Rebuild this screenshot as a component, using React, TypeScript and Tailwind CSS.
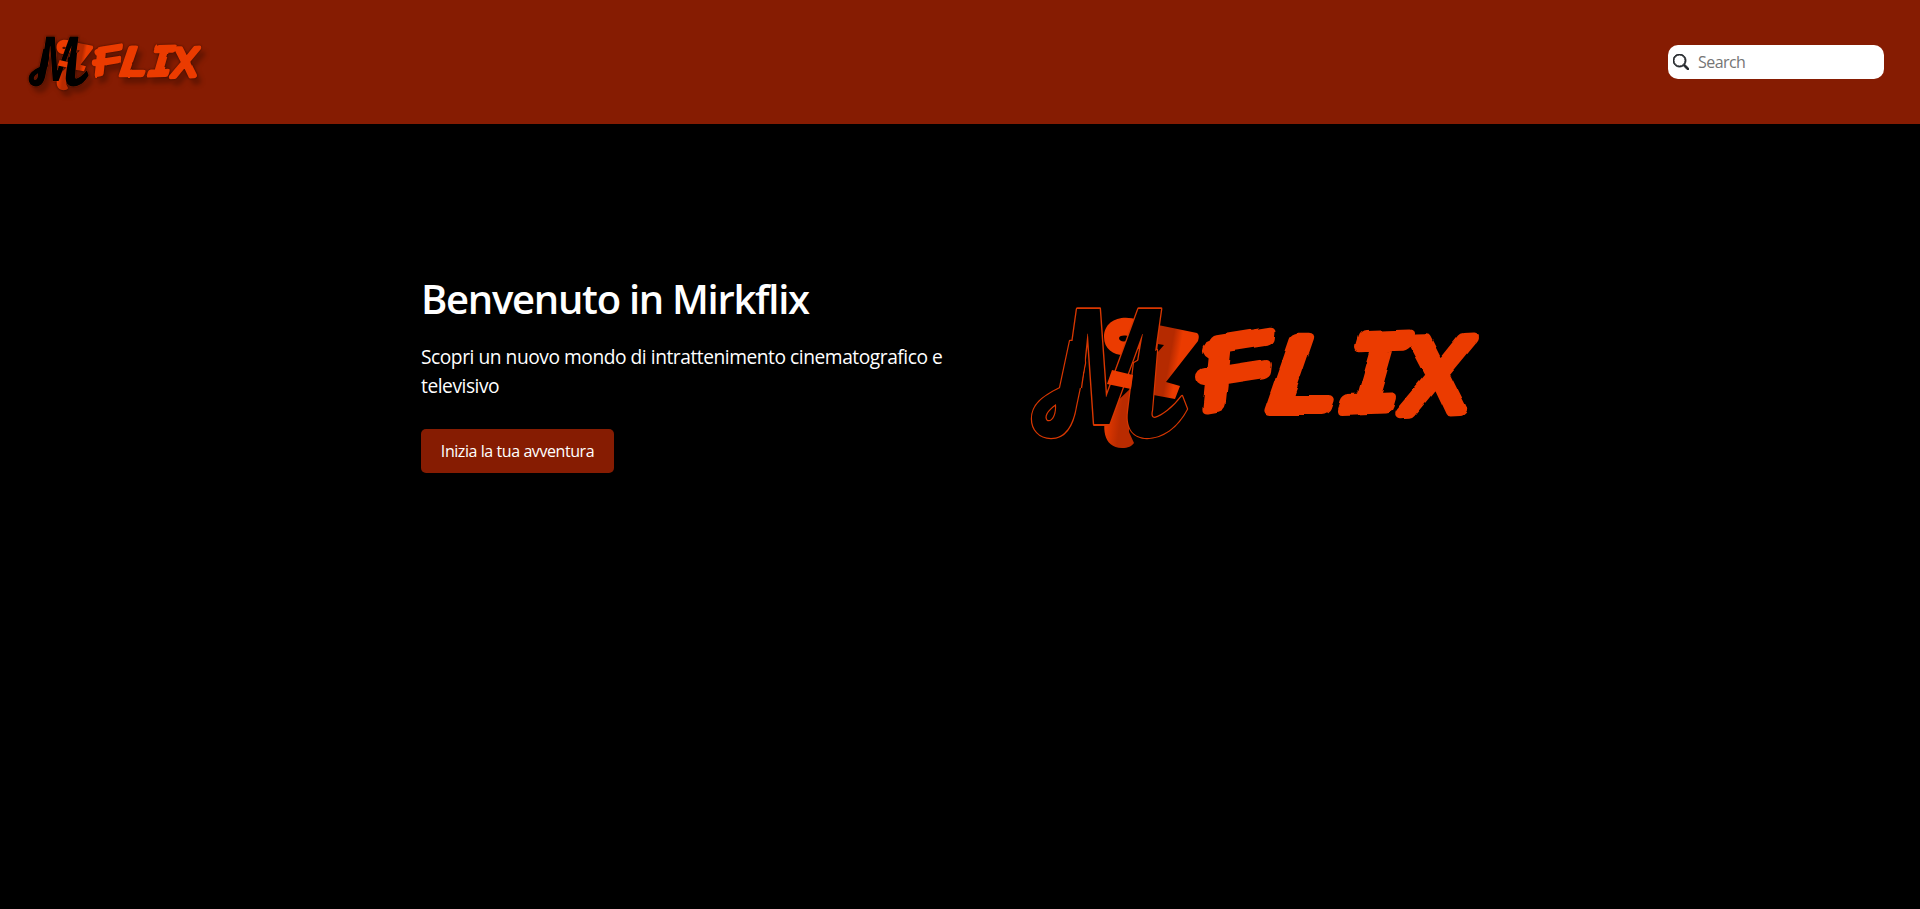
type LogoProps = { id: string; className: string; small?: boolean };

const MARK_LOOP =
  "M1070 341 L1060 388 C1042 397 1032 405 1032 419 C1032 429 1039 438 1051 438 C1065 438 1073 425 1076 406 L1085 363 L1083 341 Z M1056 404 C1047 410 1043 417 1047 421 C1053 423 1057 414 1056 404 Z";
const MARK_TAIL =
  "M1134 363 L1128 412 C1126 429 1134 438 1147 438 C1162 438 1177 428 1187 409 L1182 396 C1173 408 1162 416 1155 418 C1151 418 1151 414 1152 410 L1157 350 Z";

function Monogram({ clip }: { clip: string }) {
  return (
    <g clipPath={`url(#${clip})`}>
      <text
        transform="translate(1051 424) skewX(-8) scale(1.1 1.61)"
        fontSize="100"
        className="font-['Open_Sans',sans-serif] font-bold"
      >
        M
      </text>
    </g>
  );
}

function Logo({ id, className, small = false }: LogoProps) {
  return (
    <svg viewBox="1020 295 470 165" className={className} role="img" aria-label="Mirkflix" overflow="visible">
      <defs>
        <linearGradient id={`${id}-fold`} x1="1150" x2="1195" y1="350" y2="358" gradientUnits="userSpaceOnUse">
          <stop offset="0.45" stopColor="#b52a00" />
          <stop offset="0.65" stopColor="#eb3b00" />
        </linearGradient>
        <linearGradient id={`${id}-foot`} x1="1104" x2="1136" y1="420" y2="424" gradientUnits="userSpaceOnUse">
          <stop offset="0" stopColor="#eb3b00" />
          <stop offset="0.5" stopColor="#b92b00" />
        </linearGradient>
        <clipPath id={`${id}-stems`}>
          <path d="M1000 290 H1220 V402 H1122 V445 H1082 V388 H1000 Z" />
        </clipPath>
        <filter id={`${id}-brush`} x="-10%" y="-10%" width="120%" height="120%">
          <feTurbulence type="fractalNoise" baseFrequency="0.035" numOctaves="2" seed="4" />
          <feDisplacementMap in="SourceGraphic" scale="5" xChannelSelector="R" yChannelSelector="G" />
        </filter>
      </defs>

      <g fill="#eb3b00">
        <path d="M1138 320 C1122 314 1104 320 1104 337 C1104 360 1139 361 1143 340 L1130 338 C1127 343 1119 342 1119 338 C1120 335 1126 335 1130 337 Z" />
        <path
          fill={`url(#${id}-fold)`}
          fillRule="evenodd"
          d="M1158 325 L1197 333 Q1200 335 1198 341 L1166 382 L1180 386 L1175 399 L1148 394 Z M1158 344 L1164 345 L1157 353 Z"
        />
        <path fill={`url(#${id}-foot)`} d="M1131 388 L1108 410 C1101 426 1103 448 1122 448 C1128 448 1132 446 1134 443 L1129 432 Z" />
      </g>

      <g fill="none" stroke="#d83700" strokeWidth={small ? 1 : 2.4} strokeLinejoin="round">
        <Monogram clip={`${id}-stems`} />
        <path d={MARK_LOOP} />
        <path d={MARK_TAIL} />
      </g>
      <g fill="#000" fillRule="evenodd">
        <Monogram clip={`${id}-stems`} />
        <path d={MARK_LOOP} />
        <path d={MARK_TAIL} />
      </g>
      <path fill="#eb3b00" d="M1112 370 L1133 375 L1131 389 L1107 384 Z" />

      <g
        filter={`url(#${id}-brush)`}
        fill="#eb3b00"
        stroke="#eb3b00"
        strokeWidth="12"
        strokeLinejoin="round"
        strokeLinecap="round"
        fontSize="100"
        className="font-['Liberation_Sans',sans-serif]"
      >
        <text transform="translate(1200 409) rotate(-9) skewX(-15) scale(1.1 0.94)">F</text>
        <path d="M1204 377 L1216 377 M1211 350 L1224 345" strokeWidth="18" fill="none" />
        <text transform="translate(1262 409) skewX(-19) scale(1.18 1.02)">L</text>
        <text transform="translate(1333 409) rotate(-2) skewX(-18) scale(1.08 1.07)" className="font-['Liberation_Mono',monospace]">
          I
        </text>
        <text transform="translate(1398 413) rotate(-2) skewX(-12) scale(0.98 1.04)">X</text>
      </g>
    </svg>
  );
}

export default function App() {
  return (
    <div className="min-h-screen bg-black font-['Open_Sans','Noto_Sans',sans-serif] text-white">
      <header className="flex h-[124px] items-start justify-between bg-[#861c02] pr-9 pl-6">
        <a href="#" className="mt-[31px]">
          <Logo
            id="nav"
            small
            className="h-16 w-[182px] [filter:drop-shadow(0_0_1px_rgba(0,0,0,.55))_drop-shadow(4px_6px_2px_rgba(0,0,0,.25))]"
          />
        </a>
        <label className="mt-[45px] flex h-[34px] w-[216px] items-center rounded-[10px] bg-white pl-[5px]">
          <svg viewBox="0 0 16 16" className="size-4 shrink-0 fill-[#212529]">
            <path
              d="M11.742 10.344a6.5 6.5 0 1 0-1.397 1.398h-.001q.044.06.098.115l3.85 3.85a1 1 0 0 0 1.415-1.414l-3.85-3.85a1 1 0 0 0-.115-.1zM12 6.5a5.5 5.5 0 1 1-11 0 5.5 5.5 0 0 1 11 0"
              stroke="#212529"
              strokeWidth="0.9"
            />
          </svg>
          <input
            type="text"
            placeholder="Search"
            className="ml-[9px] w-44 text-base tracking-[-0.55px] text-gray-900 outline-none placeholder:text-[#757575]"
          />
        </label>
      </header>

      <main className="flex items-start pl-[421px]">
        <section className="mt-[151px] w-[599px]">
          <h1 className="text-[40px] leading-[47px] font-semibold tracking-[-1.28px] whitespace-nowrap">Benvenuto in Mirkflix</h1>
          <p className="mt-5 w-[560px] text-[19.2px] leading-[29px] tracking-[-0.46px]">
            Scopri un nuovo mondo di intrattenimento cinematografico e televisivo
          </p>
          <button className="mt-[29px] block h-11 w-[193px] rounded-[5px] bg-[#861c02] text-base tracking-[-0.43px] whitespace-nowrap">
            Inizia la tua avventura
          </button>
        </section>
        <Logo id="hero" className="mt-[171px] h-[165px] w-[470px]" />
      </main>
    </div>
  );
}
